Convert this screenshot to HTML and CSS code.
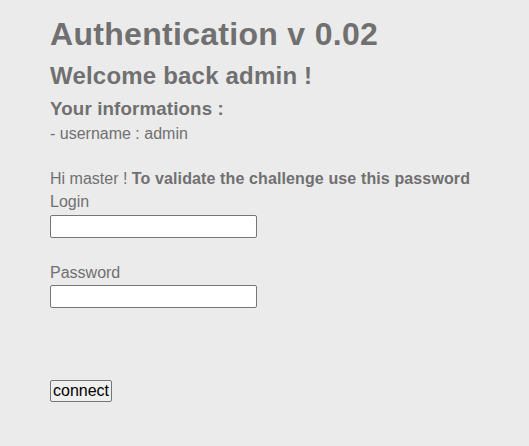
FILE: index.html
```html
<!DOCTYPE html>
<html>
<head>
<meta charset="utf-8">
<link rel="stylesheet" href="styles.css">
</head>
<body>
<div class="page">
  <h1 class="title">Authentication v 0.02</h1>
  <h2 class="welcome">Welcome back admin !</h2>
  <h3 class="info">Your informations :</h3>
  <p class="line">- username : admin</p>
  <p class="hi">Hi master ! <b class="strong">To validate the challenge use this password</b></p>
  <form class="form">
    <label class="label">Login</label>
    <input class="field field-login" type="text">
    <label class="label label-gap">Password</label>
    <input class="field" type="password">
    <button class="btn" type="button">connect</button>
  </form>
</div>
</body>
</html>
```

FILE: styles.css
```css
html, body {
  margin: 0;
  padding: 0;
  background: #ebebeb;
}
body {
  font-family: "Liberation Sans", Arial, sans-serif;
  color: #707070;
}
.page {
  padding: 16px 0 0 50px;
}
.title {
  font-size: 32px;
  font-weight: bold;
  margin: 0;
  line-height: 37px;
  letter-spacing: 0.3px;
}
.welcome {
  font-size: 24px;
  font-weight: bold;
  margin: 9px 0 0;
  line-height: 28px;
  letter-spacing: 0.2px;
}
.info {
  font-size: 18.72px;
  font-weight: bold;
  margin: 8px 0 0;
  line-height: 22px;
  letter-spacing: 0.15px;
}
.line {
  font-size: 16px;
  margin: 5px 0 0;
  line-height: 18px;
}
.hi {
  font-size: 16px;
  margin: 27px 0 0;
  line-height: 18px;
}
.strong {
  letter-spacing: 0.12px;
}
.form {
  display: flex;
  flex-direction: column;
  align-items: flex-start;
}
.label {
  font-size: 16px;
  line-height: 18px;
  margin-top: 5px;
}
.label-gap {
  margin-top: 26px;
}
.field {
  box-sizing: border-box;
  width: 207px;
  height: 23px;
  margin: 3px 0 0;
  border: 1px solid #767676;
  border-radius: 2px;
  background: #fff;
}
.field-login {
  margin-top: 4px;
}
.btn {
  box-sizing: border-box;
  margin-top: 72px;
  font-family: "Liberation Sans", Arial, sans-serif;
  font-size: 16px;
  color: #000;
  background: #efefef;
  border: 1px solid #767676;
  border-radius: 2px;
  padding: 1px 2px;
  height: 22px;
  line-height: 18px;
}
```
